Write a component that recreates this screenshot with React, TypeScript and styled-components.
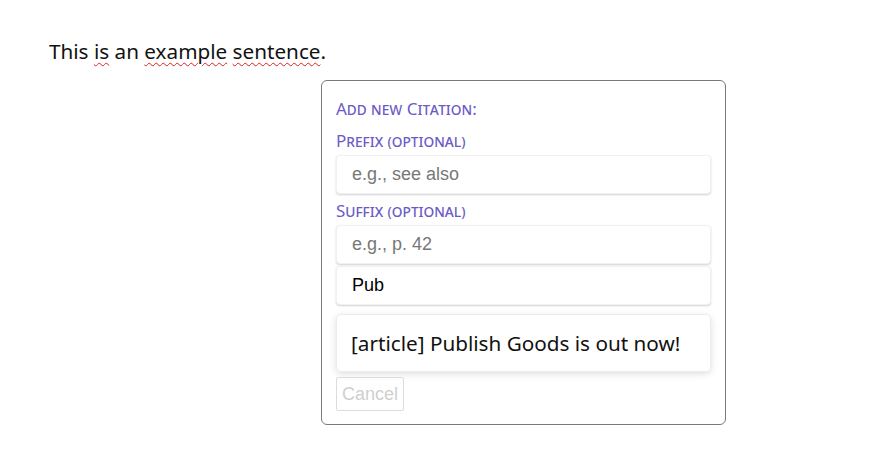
import styled, { createGlobalStyle } from "styled-components";

const GlobalStyle = createGlobalStyle`
  body {
    margin: 0;
    background: #ffffff;
    font-family: "Noto Sans", Lato, sans-serif;
  }
`;

const App = () => {
  return (
    <Page>
      <GlobalStyle />
      <Sentence>
        This <Misspelled>is</Misspelled> an <Misspelled>example</Misspelled>{" "}
        <Misspelled>sentence</Misspelled>.
      </Sentence>
      <Popover>
        <Label>Add new Citation:</Label>
        <Label $gap={8}>Prefix (optional)</Label>
        <Field placeholder="e.g., see also" />
        <Label $gap={5}>Suffix (optional)</Label>
        <Field placeholder="e.g., p. 42" />
        <Field defaultValue="Pub" />
        <Suggestion>[article] Publish Goods is out now!</Suggestion>
        <CancelButton disabled>Cancel</CancelButton>
      </Popover>
    </Page>
  );
};

const Page = styled.div`
  padding: 36px 0 0 49px;
`;

const Sentence = styled.p`
  margin: 0;
  font-size: 20.7px;
  line-height: 30px;
  color: #111;
`;

const Misspelled = styled.span`
  text-decoration: underline wavy #e02020;
  text-decoration-thickness: 1px;
  text-underline-offset: 3px;
`;

const Popover = styled.div`
  display: flex;
  flex-direction: column;
  width: 375px;
  margin: 14px 0 0 272px;
  padding: 16px 14px 13px 14px;
  border: 1px solid #7a7a7a;
  border-radius: 6px;
  background: #fff;
`;

const Label = styled.div<{ $gap?: number }>`
  margin-top: ${(p) => p.$gap ?? 0}px;
  font-size: 17px;
  line-height: 24px;
  font-variant: small-caps;
  color: #6b5bc6;
`;

const Field = styled.input`
  box-sizing: border-box;
  height: 39px;
  margin-top: 2px;
  padding: 0 15px;
  border: 1px solid #f1f1f1;
  border-radius: 4px;
  box-shadow: 0 1px 2px rgba(0, 0, 0, 0.18);
  font-family: "Liberation Sans", Arial, sans-serif;
  font-size: 18px;
  color: #000;
  outline: none;

  &::placeholder {
    color: #777;
  }
`;

const Suggestion = styled.div`
  display: flex;
  align-items: center;
  height: 58px;
  box-sizing: border-box;
  margin-top: 9px;
  padding: 0 14px;
  border: 1px solid #ececec;
  border-radius: 5px;
  box-shadow: 0 2px 7px rgba(0, 0, 0, 0.13);
  font-size: 20.7px;
  color: #111;
`;

const CancelButton = styled.button`
  align-self: flex-start;
  width: 68px;
  height: 34px;
  margin-top: 5px;
  padding: 0;
  border: 1px solid #dcdcdc;
  border-radius: 2px;
  background: transparent;
  font-family: "Liberation Sans", Arial, sans-serif;
  font-size: 18px;
  color: #cfcfcf;
`;

export default App;
